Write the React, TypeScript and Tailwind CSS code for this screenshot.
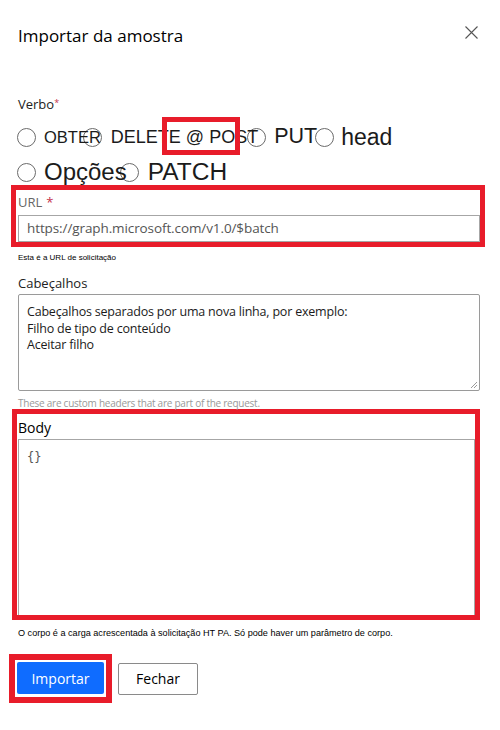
const segoe = { fontFamily: '"Open Sans", "Noto Sans", sans-serif' };

function Radio({ className = "" }: { className?: string }) {
  return (
    <span
      className={`inline-block w-[19px] h-[19px] shrink-0 rounded-full border-[1.5px] border-[#6b6b6b] ${className}`}
    />
  );
}

export default function App() {
  return (
    <div className="w-[500px] h-[730px] bg-white text-[#1b1b1b] font-['Liberation_Sans',Arial,sans-serif] overflow-hidden">
      {/* Header */}
      <div className="flex items-center justify-between pl-[18px] pr-[22px] pt-[22px] h-[48px]">
        <h1 className="text-[17px] leading-none text-black" style={segoe}>
          Importar da amostra
        </h1>
        <svg width="13" height="13" viewBox="0 0 13 13" className="mb-[6px]">
          <path d="M0.5 0.5 L12.5 12.5 M12.5 0.5 L0.5 12.5" stroke="#555" strokeWidth="1.1" />
        </svg>
      </div>

      {/* Verbo */}
      <div className="pl-[18px] mt-[50px] text-[13px] leading-none text-[#222]" style={segoe}>
        Verbo<span className="text-[#c4314b] text-[9px] align-top">*</span>
      </div>

      {/* Radio row 1 */}
      <div className="relative mt-[8px] pl-[17px] h-[36px] flex items-center">
        <Radio />
        <span className="relative ml-[8px] text-[16.5px] leading-none">OBTER</span>
        <Radio className="ml-[-18px]" />
        <span className="relative ml-[9px] text-[18px] leading-none">DELETE @ POST</span>
        <Radio className="ml-[-11px]" />
        <span className="relative ml-[8px] text-[21.5px] leading-none">PUT</span>
        <Radio className="ml-[-2px]" />
        <span className="relative ml-[7px] text-[23px] leading-none">head</span>
        <div className="absolute left-[162px] top-[-2px] w-[78px] h-[38px] border-[5px] border-[#e81c2a]" />
      </div>

      {/* Radio row 2 */}
      <div className="mt-[0px] pl-[17px] h-[34px] flex items-center">
        <Radio />
        <span className="relative ml-[8px] text-[24px] leading-none">Opções</span>
        <Radio className="ml-[-7px]" />
        <span className="relative ml-[9px] text-[24.5px] leading-none">PATCH</span>
      </div>

      {/* URL */}
      <div
        className="ml-[11px] mr-[15px] mt-[-4px] h-[62px] border-[5px] border-[#e81c2a] pl-[2px] flex flex-col"
        style={segoe}
      >
        <div className="h-[25px] flex items-center text-[13px] text-[#666]">
          URL <span className="ml-[4px] text-[#c4314b]">*</span>
        </div>
        <div className="h-[28px] border border-[#a6a6a6] flex items-center pl-[8px] text-[13.5px] tracking-[-0.1px] text-[#555]">
          https://graph.microsoft.com/v1.0/$batch
        </div>
      </div>
      <div className="pl-[18px] mt-[6px] text-[8px] leading-[10px] text-black">
        Esta é a URL de solicitação
      </div>

      {/* Cabeçalhos */}
      <div className="pl-[18px] mt-[12px] text-[13px] leading-[16px] text-[#222]" style={segoe}>
        Cabeçalhos
      </div>
      <div
        className="relative ml-[18px] mr-[20px] mt-[3px] h-[97px] border border-[#9a9a9a] rounded-[2px] pl-[8px] pt-[9px] text-[12.5px] tracking-[-0.2px] leading-[16.5px] text-[#1b1b1b]"
        style={segoe}
      >
        <div>Cabeçalhos separados por uma nova linha, por exemplo:</div>
        <div>Filho de tipo de conteúdo</div>
        <div>Aceitar filho</div>
        <svg className="absolute right-[1px] bottom-[1px]" width="9" height="9" viewBox="0 0 9 9">
          <path d="M8 2 L2 8 M8 5 L5 8" stroke="#9a9a9a" strokeWidth="1" />
        </svg>
      </div>
      <div
        className="pl-[18px] mt-[6px] text-[10px] tracking-[-0.25px] leading-[13px] text-[#999]"
        style={segoe}
      >
        These are custom headers that are part of the request.
      </div>

      {/* Body */}
      <div
        className="ml-[12px] mr-[20px] mt-[-1px] h-[211px] border-[5px] border-[#e81c2a] pl-[1px] flex flex-col"
        style={segoe}
      >
        <div className="h-[25px] pt-[2px] flex items-center text-[14px] text-black">Body</div>
        <div className="flex-1 border border-[#a6a6a6] border-b-0 pl-[8px] pt-[8px] font-['DejaVu_Sans_Mono',monospace] text-[12px] text-[#555]">
          {"{}"}
        </div>
      </div>
      <div className="pl-[18px] mt-[7px] text-[9.1px] leading-[12px] text-black">
        O corpo é a carga acrescentada à solicitação HT PA. Só pode haver um parâmetro de corpo.
      </div>

      {/* Buttons */}
      <div className="pl-[9px] mt-[15px] flex items-center gap-[6px]" style={segoe}>
        <div className="border-[6px] border-[#e81c2a] p-[2px] pb-[3px]">
          <button className="w-[87px] h-[32px] rounded-[2px] bg-[#0f6cff] text-white text-[14px]">
            Importar
          </button>
        </div>
        <button className="w-[80px] h-[32px] rounded-[2px] border border-[#8a8a8a] bg-white text-black text-[14px]">
          Fechar
        </button>
      </div>
    </div>
  );
}
